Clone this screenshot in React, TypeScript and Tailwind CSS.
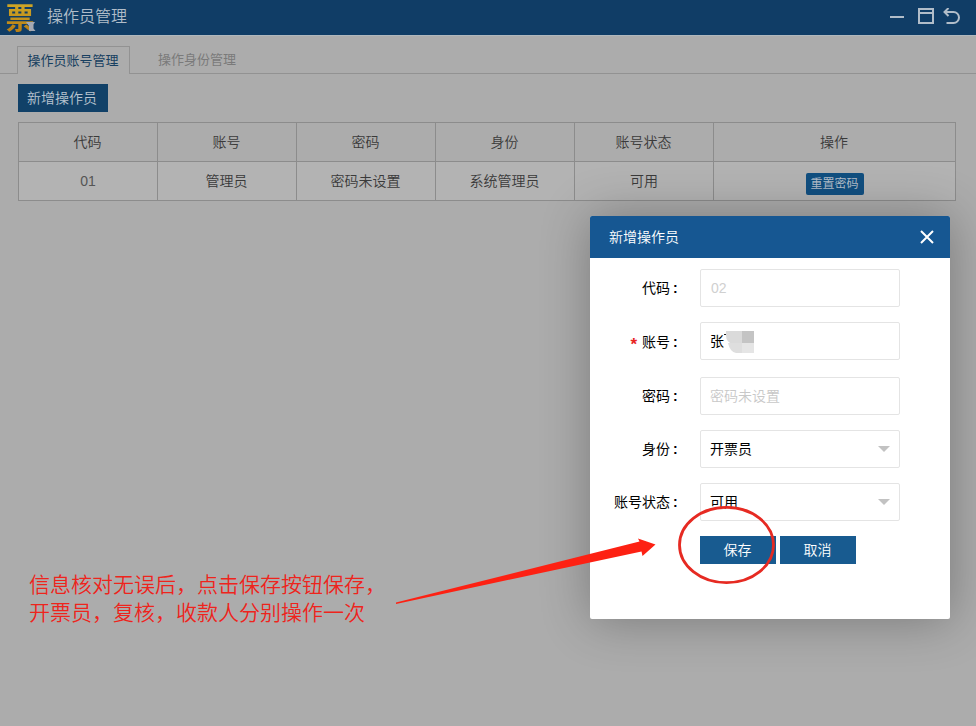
import type { ReactNode } from 'react'

const COLUMNS = ['代码', '账号', '密码', '身份', '账号状态', '操作']

const OPERATORS = [
  { code: '01', account: '管理员', password: '密码未设置', role: '系统管理员', status: '可用' },
]

function Logo() {
  return (
    <div className="relative flex h-[35px] w-8 shrink-0 items-center justify-center">
      <span className="-mt-1 block shrink-0 bg-gradient-to-b from-[#d6b52c] to-[#b4760f] bg-clip-text font-['Noto_Sans_CJK_SC',sans-serif] text-[29px] font-bold leading-[44px] text-transparent">
        票
      </span>
      <svg width="11" height="9" viewBox="0 0 11 9" className="absolute bottom-1 right-0">
        <path d="M1 0h9L8.500 2.500v4L10.500 9H4V4z" fill="#a4a9b3" />
      </svg>
    </div>
  )
}

function TitleBar() {
  return (
    <header className="flex h-[35px] shrink-0 items-center bg-[#103d66] pl-1 pr-3.5 text-[#b1bdc9]">
      <Logo />
      <h1 className="ml-[11px] flex-1 -translate-y-px text-[16px] leading-8">操作员管理</h1>
      <svg width="72" height="20" viewBox="0 0 72 20" fill="none" stroke="currentColor" strokeWidth="2">
        <path d="M0 9h14" />
        <path d="M29 1h14v14H29zM29 5h14" />
        <path d="M55 4h8.500a5.400 5.400 0 0 1 0 11H56.500M58.500 0L54.500 4l4 4" />
      </svg>
    </header>
  )
}

function Tabs() {
  return (
    <nav className="flex h-[39px] shrink-0 items-end border-b border-t border-b-[#929292] border-t-[#b0b8be] pl-[17px] text-[13px]">
      <div className="-mb-px flex h-7 w-[113px] items-center justify-center border border-b-0 border-[#929292] bg-[#acacac] pr-px font-normal text-[#173f60]">
        操作员账号管理
      </div>
      <div className="flex h-[27px] items-center pl-7 font-normal text-[#7a7a7a]">操作身份管理</div>
    </nav>
  )
}

function OperatorTable() {
  return (
    <table className="mt-2.5 w-[938px] table-fixed border-collapse text-center text-[14px] text-[#3a3a3a]">
      <colgroup>
        <col className="w-[139px]" />
        <col className="w-[139px]" />
        <col className="w-[139px]" />
        <col className="w-[139px]" />
        <col className="w-[139px]" />
        <col />
      </colgroup>
      <thead>
        <tr className="h-[39px]">
          {COLUMNS.map((c) => (
            <th key={c} className="border border-[#8c8c8c] pr-px font-[350]">{c}</th>
          ))}
        </tr>
      </thead>
      <tbody>
        {OPERATORS.map((o) => (
          <tr key={o.code} className="h-[39px] bg-[#b3b3b3]">
            <td className="border border-[#8c8c8c] font-['Liberation_Sans'] text-[#555]">{o.code}</td>
            <td className="border border-[#8c8c8c] pr-px">{o.account}</td>
            <td className="border border-[#8c8c8c] pr-px">{o.password}</td>
            <td className="border border-[#8c8c8c] pr-px">{o.role}</td>
            <td className="border border-[#8c8c8c]">{o.status}</td>
            <td className="border border-[#8c8c8c]">
              <button className="mx-auto mt-[5px] block h-[22px] w-[58px] rounded-[2px] bg-[#114f80] text-[12px] font-normal leading-[22px] text-[#b1bdc9]">
                重置密码
              </button>
            </td>
          </tr>
        ))}
      </tbody>
    </table>
  )
}

interface FieldProps {
  label: string
  required?: boolean
  select?: boolean
  className?: string
  children: ReactNode
}

function Field({ label, required, select, className = '', children }: FieldProps) {
  return (
    <div className={`flex h-[38px] items-center text-black ${className}`}>
      <div className={`flex w-[94px] shrink-0 items-center justify-end ${required ? 'pt-[3px]' : ''}`}>
        {required && <span className="mr-[5px] mt-1 font-['Liberation_Sans'] text-[17px] font-bold leading-none text-[#e8251f]">*</span>}
        {label}
        <span className="w-3.5 pl-[3px] font-['Liberation_Sans'] font-bold">:</span>
      </div>
      <div className="ml-4 flex h-[38px] w-[200px] items-center rounded-[2px] border border-[#e4e4e4] px-[9px]">
        {children}
        {select && <span className="ml-auto border-x-[6px] border-t-[6px] border-x-transparent border-t-[#c2c2c2]" />}
      </div>
    </div>
  )
}

function OperatorDialog() {
  return (
    <section className="absolute left-[590px] top-[216px] h-[403px] w-[360px] rounded-[2px] bg-white text-[14px] font-normal shadow-[1px_1px_50px_rgba(0,0,0,0.3)]">
      <div className="flex h-[42px] items-center justify-between rounded-t-[2px] bg-[#165792] pl-[19px] pr-4 text-white">
        <h2 className="font-[350]">新增操作员</h2>
        <svg width="14" height="14" viewBox="0 0 14 14" fill="none" stroke="currentColor" strokeWidth="2">
          <path d="M1 1l12 12M13 1L1 13" />
        </svg>
      </div>
      <Field label="代码" className="mt-[11px]">
        <span className="pl-px font-['Liberation_Sans'] text-[#d0d0d0]">02</span>
      </Field>
      <Field label="账号" required className="mt-[15px]">
        张
        {/* masked part of the name */}
        <svg width="31" height="22" viewBox="0 0 31 22" className="mt-0.5">
          <path d="M2 0h17v12H6Q1 9 2 0z" fill="#dadada" />
          <path d="M18 0h12v12H18z" fill="#c4c4c4" />
          <path d="M4 12h14v10h-6q-6-1-8-10z" fill="#dedede" />
          <path d="M18 12h12v10H18z" fill="#e5e5e5" />
          <path d="M0 3h2v1H0z" fill="#222" />
        </svg>
      </Field>
      <Field label="密码" className="mt-[17px]">
        <span className="font-[350] text-[#c8c8c8]">密码未设置</span>
      </Field>
      <Field label="身份" select className="mt-[15px]">开票员</Field>
      <Field label="账号状态" select className="mt-[15px]">可用</Field>
      <div className="ml-[110px] mt-[15px] flex gap-1 font-[350] text-white">
        <button className="h-7 w-[76px] bg-[#185b90] pr-px">保存</button>
        <button className="h-7 w-[76px] bg-[#185b90] pr-px">取消</button>
      </div>
    </section>
  )
}

function Annotation() {
  return (
    <>
      <p className="absolute left-[29px] top-[571px] whitespace-nowrap text-[21px] leading-7 text-[#ee241c]">
        信息核对无误后，点击保存按钮保存，
        <br />
        开票员，复核，收款人分别操作一次
      </p>
      <svg className="pointer-events-none absolute inset-0" width="976" height="726" viewBox="0 0 976 726">
        <path d="M396 602.500L639.500 541.500L638 538.500L655.500 544.500L642.500 556L641.500 551.500L396 604z" fill="#fd2113" />
        <ellipse cx="726.500" cy="545" rx="47" ry="37.700" fill="none" stroke="#e62a22" strokeWidth="2.800" />
      </svg>
    </>
  )
}

export default function App() {
  return (
    <div className="relative flex h-[726px] w-[976px] flex-col overflow-hidden bg-[#acacac] font-['Liberation_Sans','Noto_Sans_CJK_SC',sans-serif] font-[350]">
      <TitleBar />
      <Tabs />
      <main className="px-[18px] pt-2.5">
        <button className="block h-7 w-[90px] bg-[#114168] pr-0.5 text-[14px] text-[#b9c5d0]">新增操作员</button>
        <OperatorTable />
      </main>
      <OperatorDialog />
      <Annotation />
    </div>
  )
}
